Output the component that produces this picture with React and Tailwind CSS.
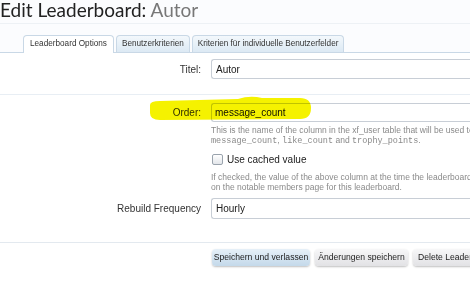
export default function App() {
  const f = { fontFamily: '"Liberation Sans", Arial, sans-serif' };
  const mono = { fontFamily: '"Liberation Mono", monospace' };
  return (
    <div className="w-[470px] h-[300px] overflow-hidden bg-[#fbfcfe] relative" style={f}>
      <div className="h-[24px] border-b border-[#edf1f5]">
        <div className="text-[19px] leading-[20px] text-[#222] whitespace-nowrap" style={{ fontFamily: 'Lato, sans-serif' }}>
          Edit Leaderboard: <span className="text-[#777]">Autor</span>
        </div>
      </div>
      <div className="mt-[11px] flex items-end gap-[2px] pl-[23px] border-b border-[#c9d8e6] h-[18px] text-[8.2px] text-[#333] whitespace-nowrap">
        <div className="h-[18px] px-[6px] flex items-center bg-white border border-b-0 border-[#c9d8e6] rounded-t-[4px] -mb-[1px]">Leaderboard Options</div>
        <div className="h-[17px] px-[5px] flex items-center bg-gradient-to-b from-[#f3f8fc] to-[#dce9f4] border border-b-0 border-[#c9d8e6] rounded-t-[4px]">Benutzerkriterien</div>
        <div className="h-[17px] px-[5px] flex items-center bg-gradient-to-b from-[#f3f8fc] to-[#dce9f4] border border-b-0 border-[#c9d8e6] rounded-t-[4px]">Kriterien für individuelle Benutzerfelder</div>
      </div>
      <div className="bg-white">
        <div className="grid grid-cols-[201px_1fr] gap-x-[10px] pt-[6px] pb-[15px] border-b border-[#e8eef4] items-center">
          <div className="text-right text-[10px] text-[#333]">Titel:</div>
          <div className="h-[20px] border border-[#c8ced6] rounded-l-[3px] border-r-0 flex items-center pl-[4px] text-[10px] text-[#222] bg-white">Autor</div>
        </div>
        <div className="relative grid grid-cols-[201px_1fr] gap-x-[10px] pt-[8px] items-center">
          <div className="text-right text-[10px] text-[#333]">Order:</div>
          <div className="h-[19px] border border-[#c8ced6] border-r-0 rounded-l-[3px] flex items-center pl-[3px] text-[10px] text-[#111] bg-white">message_count</div>
          <div></div>
          <div className="pt-[3px] text-[8.5px] leading-[10px] text-[#8a8a8a] whitespace-nowrap">
            <div>This is the name of the column in the xf_user table that will be used to</div>
            <div>
              <span style={mono} className="text-[8.5px]">message_count</span>,{" "}
              <span style={mono} className="text-[8.5px]">like_count</span> and{" "}
              <span style={mono} className="text-[8.5px]">trophy_points</span>.
            </div>
          </div>
          <div></div>
          <div className="pt-[6px] flex items-center gap-[4px] text-[10px] text-[#222]">
            <span className="w-[11px] h-[11px] rounded-[2px] border border-[#9aa3ad] bg-gradient-to-b from-white to-[#e3e6ea] ml-[1px]"></span>
            <span>Use cached value</span>
          </div>
          <div></div>
          <div className="pt-[5px] text-[8.5px] leading-[10px] text-[#8a8a8a] whitespace-nowrap">
            <div>If checked, the value of the above column at the time the leaderboard</div>
            <div>on the notable members page for this leaderboard.</div>
          </div>
          <div className="text-right text-[10px] text-[#333] pt-[6px]">Rebuild Frequency</div>
          <div className="pt-[6px]">
            <div className="h-[21px] border border-[#c8ced6] border-r-0 rounded-l-[3px] flex items-center pl-[4px] text-[10px] text-[#222] bg-white">Hourly</div>
          </div>
          <svg className="absolute left-[148px] -top-[1px] mix-blend-multiply" width="164" height="26" viewBox="148 96 164 26">
            <path d="M150,107 Q150,103 160,103 L238,101 Q250,97 262,100 L300,100 Q311,100 311,110 Q311,121 300,121 L160,122 Q150,122 150,115 Z" fill="#f5f200" />
          </svg>
        </div>
        <div className="mt-[23px] border-t border-[#e3e9ef] pt-[6px] pl-[212px] flex gap-[5px] text-[8.6px] text-[#222] whitespace-nowrap pb-[40px]">
          <div className="shrink-0 h-[17px] w-[98px] justify-center flex items-center rounded-[4px] bg-gradient-to-b from-[#e6f0f8] to-[#c4d9ea] shadow-[0_1px_2px_rgba(0,0,0,0.25)]">Speichern und verlassen</div>
          <div className="shrink-0 h-[17px] w-[93px] justify-center flex items-center rounded-[4px] bg-gradient-to-b from-[#f7f7f8] to-[#e2e2e5] shadow-[0_1px_2px_rgba(0,0,0,0.25)]">Änderungen speichern</div>
          <div className="shrink-0 h-[17px] px-[5px] flex items-center rounded-[4px] bg-gradient-to-b from-[#f7f7f8] to-[#e2e2e5] shadow-[0_1px_2px_rgba(0,0,0,0.25)]">Delete Leaderboard</div>
        </div>
      </div>
    </div>
  );
}
